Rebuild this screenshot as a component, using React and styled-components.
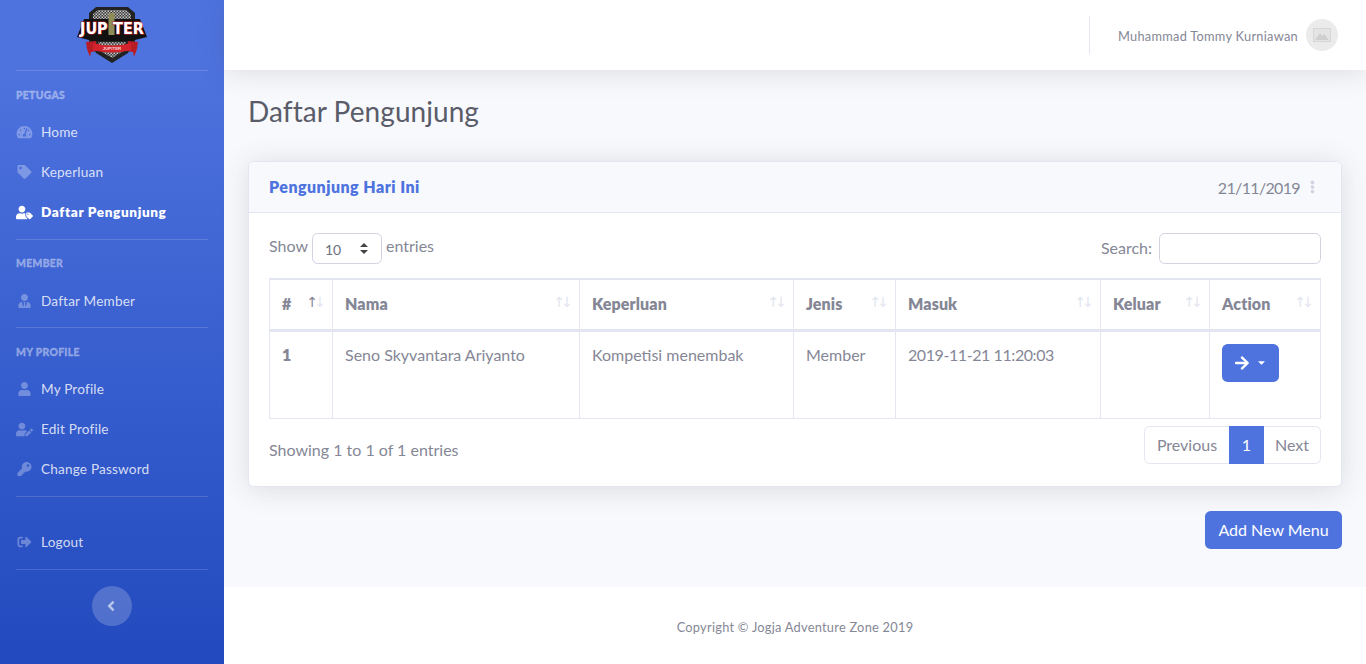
import React from "react";
import styled, { createGlobalStyle } from "styled-components";
import {
  FaTachometerAlt, FaTag, FaUserTag, FaUserTie, FaUser, FaUserEdit, FaKey,
  FaSignOutAlt, FaAngleLeft, FaEllipsisV, FaArrowRight, FaCaretDown,
} from "react-icons/fa";

const FONT = `Lato, "Noto Sans", "Liberation Sans", sans-serif`;

const Global = createGlobalStyle`
  * { box-sizing: border-box; }
  html, body { margin: 0; padding: 0; height: 664px; overflow: hidden; }
  body { font-family: ${FONT}; color: #858796; font-size: 16px; background: #f8f9fc; }
`;

const Wrapper = styled.div`display: flex; height: 664px;`;

const Sidebar = styled.aside`
  width: 224px; flex: none; display: flex; flex-direction: column; padding: 0 16px;
  background: linear-gradient(180deg, #4e73df 10%, #224abe 100%);
`;
const Brand = styled.div`height: 70px; display: flex; justify-content: center; align-items: flex-start; padding-top: 6px;`;
const Divider = styled.hr`margin: ${p => p.$m || "0"}; border: 0; height: 1px; background: rgba(255,255,255,.15); flex: none;`;
const SideHeading = styled.div`
  font-size: 10.4px; font-weight: 900; line-height: 13px; letter-spacing: .3px; text-transform: uppercase;
  -webkit-text-stroke: .3px rgba(255,255,255,.4);
  color: rgba(255,255,255,.4); margin-top: ${p => p.$mt || "18px"}; margin-bottom: ${p => p.$mb || "10px"};
`;
const NavItem = styled.a`
  height: 40px; display: flex; align-items: center; gap: 8px; font-size: 13.6px;
  letter-spacing: ${p => (p.$active ? ".62px" : ".18px")};
  font-weight: ${p => (p.$active ? 800 : 400)};
  color: ${p => (p.$active ? "#fff" : "rgba(255,255,255,.8)")};
  svg { width: 17px; flex: none; font-size: ${p => p.$icon || "14px"}; color: ${p => (p.$active ? "#fff" : "rgba(255,255,255,.3)")}; }
`;
const Toggle = styled.button`
  width: 40px; height: 40px; border-radius: 50%; border: 0; margin: 16px auto 0; display: flex; flex: none;
  align-items: center; justify-content: center; background: rgba(255,255,255,.2); color: rgba(255,255,255,.6); font-size: 16px; padding: 0 2px 0 0;
`;

const Main = styled.div`flex: 1; min-width: 0; display: flex; flex-direction: column;`;
const Topbar = styled.header`
  height: 70px; flex: none; background: #fff; box-shadow: 0 .15rem 1.75rem 0 rgba(58,59,69,.15);
  display: flex; justify-content: flex-end; align-items: center; padding-right: 28px;
`;
const TopDivider = styled.div`width: 1px; height: 38px; background: #e3e6f0; margin-right: 28px;`;
const UserName = styled.span`font-size: 12.8px; color: #858796; margin-right: 8px; letter-spacing: .27px; padding-top: 2px;`;
const Avatar = styled.div`
  width: 32px; height: 32px; border-radius: 50%; background: #ebebeb; display: flex; align-items: center; justify-content: center;
`;

const Content = styled.main`flex: 1; padding: 24px 24px 0; min-height: 0;`;
const Title = styled.h1`margin: 0 0 33px; font-size: 28px; line-height: 34px; font-weight: 400; color: #5a5c69; letter-spacing: .06px;`;

const Card = styled.section`
  background: #fff; border: 1px solid #e3e6f0; border-radius: 5.6px; height: 326px;
  box-shadow: 0 .15rem 1.75rem 0 rgba(58,59,69,.15);
`;
const CardHeader = styled.div`
  height: 51px; padding: 0 26px 0 20px; background: #f8f9fc; border-bottom: 1px solid #e3e6f0; border-radius: 5px 5px 0 0;
  display: flex; align-items: center; justify-content: space-between;
`;
const CardTitle = styled.h6`margin: 0; padding-bottom: 2px; font-size: 16px; font-weight: 800; color: #4e73df; letter-spacing: .46px;`;
const DateBox = styled.div`
  display: flex; align-items: center; gap: 10px; color: #858796; font-size: 16px; letter-spacing: -.65px;
  svg { color: #d1d3e2; font-size: 14px; width: 5px; }
`;
const CardBody = styled.div`padding: 20px;`;
const Controls = styled.div`display: flex; justify-content: space-between; align-items: flex-start; height: 45px;`;
const Label = styled.label`display: flex; align-items: flex-start; gap: 4px; line-height: 26px;`;
const FilterLabel = styled(Label)`gap: 7px; line-height: 29px;`;
const EntrySelect = styled.select`
  appearance: none; width: 70px; height: 31px; margin: 0; padding: 2px 24px 0 12px; font: inherit; font-size: 14px; color: #6e707e;
  border: 1px solid #d1d3e2; border-radius: 5.6px;
  background: #fff url("data:image/svg+xml,%3Csvg xmlns='http://www.w3.org/2000/svg' width='8' height='11' viewBox='0 0 8 11'%3E%3Cpath fill='%23444' d='M4 0 8 4H0zM4 11 0 7h8z'/%3E%3C/svg%3E") no-repeat right 13px center;
`;
const SearchInput = styled.input`
  width: 162px; height: 31px; border: 1px solid #d1d3e2; border-radius: 5.6px; background: #fff; margin: 0; padding: 0 8px;
`;

const Table = styled.table`
  width: 1051px; table-layout: fixed; border-collapse: collapse;
`;
const Th = styled.th`
  position: relative; height: 51px; padding: 0 12px 1px; text-align: left; font-size: 16px; font-weight: 800; color: #858796; letter-spacing: .1px;
  border: 1px solid #e3e6f0; border-top-width: 2px; border-bottom-width: 3px;
`;
const Sort = styled.span`
  position: absolute; right: 10px; top: 12px; font-size: 14px; font-weight: 400; line-height: 20px; letter-spacing: -4px;
  font-family: "DejaVu Sans", sans-serif; color: #e3e6f0;
  b { font-weight: 400; color: ${p => (p.$active ? "#858796" : "inherit")}; }
`;
const Td = styled.td`
  height: 88px; padding: 12px; vertical-align: top; line-height: 22px; border: 1px solid #e3e6f0;
  font-weight: ${p => (p.$bold ? 800 : 400)};
  letter-spacing: ${p => (p.$numeric ? "-.42px" : "0")};
`;
const ActionButton = styled.button`
  width: 57px; height: 38px; border: 0; border-radius: 5.6px; background: #4e73df; color: #fff; display: flex; align-items: center; justify-content: center;
  gap: 6px; padding: 0; font-size: 16px;
  svg + svg { font-size: 11px; }
`;
const Footer2 = styled.div`display: flex; justify-content: space-between; align-items: flex-start; margin-top: 7px;`;
const Info = styled.div`padding-top: 12px; line-height: 24px;`;
const Pager = styled.nav`display: flex; height: 38px; border: 1px solid #e3e6f0; border-radius: 5.6px;`;
const Page = styled.a`
  width: ${p => p.$w}; margin: ${p => (p.$active ? "-1px 0" : "0")}; display: flex; align-items: center; justify-content: center; font-size: 16px;
  background: ${p => (p.$active ? "#4e73df" : "transparent")}; color: ${p => (p.$active ? "#fff" : "#858796")};
`;
const ButtonRow = styled.div`display: flex; justify-content: flex-end; margin-top: 24px;`;
const PrimaryButton = styled.button`
  width: 137px; height: 38px; border: 0; border-radius: 5.6px; background: #4e73df; color: #fff; font: inherit; font-size: 16px; padding: 0 0 2px;
`;
const Foot = styled.footer`
  height: 77px; flex: none; background: #fff; display: flex; align-items: center; justify-content: center; font-size: 12.8px; color: #858796; letter-spacing: .26px; padding-top: 3px;
`;

const Logo = () => (
  <svg width="72" height="58" viewBox="0 0 72 58" aria-label="Jupiter logo">
    <defs>
      <pattern id="chk" width="3" height="3" patternUnits="userSpaceOnUse">
        <rect width="3" height="3" fill="#3a3a3a" />
        <rect width="1.5" height="1.5" fill="#aaa" />
        <rect x="1.5" y="1.5" width="1.5" height="1.5" fill="#ccc" />
      </pattern>
    </defs>
    <path d="M20 1h32l7 6v28l-7 12-16 10-16-10-7-12V7z" fill="#222" />
    <path d="M22 4h28l5 4v12H17V8z" fill="url(#chk)" />
    <path d="M22 36h28l-4 10-10 6-10-6z" fill="url(#chk)" />
    <path d="M1 31 8 13h56l7 18-16 4H17z" fill="#111" />
    <rect x="32.5" y="7" width="6" height="22" fill="#8f8c58" />
    <path d="M10 36l10-1 1 10-6 1-1 5-3-8z M62 36l-10-1-1 10 6 1 1 5 3-8z" fill="#b81c24" />
    <path d="M17 37q19 5 38 0v7q-19 5-38 0z" fill="#d3232c" />
    <text x="36" y="43.5" textAnchor="middle" fontSize="4.4" fontWeight="700" fontFamily="Liberation Sans, sans-serif" fill="#f4d6d6">JUPITER</text>
    <text x="36" y="28" textAnchor="middle" fontSize="15.5" fontWeight="700" fontFamily="DejaVu Sans, sans-serif" fill="#fff" stroke="#c31f26" strokeWidth="1" paintOrder="stroke" textLength="64" lengthAdjust="spacingAndGlyphs">JUP<tspan fill="#8f8c58" stroke="none">I</tspan>TER</text>
  </svg>
);

const Placeholder = () => (
  <svg width="18" height="14" viewBox="0 0 18 14">
    <rect x=".5" y=".5" width="17" height="13" fill="#e4e4e4" stroke="#d6d6d6" />
    <path d="M2 12 7 5l2 3 2-2 5 6z" fill="#cfcfcf" />
  </svg>
);

const columns = [
  { name: "#", w: 63, active: true },
  { name: "Nama", w: 247 },
  { name: "Keperluan", w: 214 },
  { name: "Jenis", w: 102 },
  { name: "Masuk", w: 205 },
  { name: "Keluar", w: 109 },
  { name: "Action", w: 111 },
];

export default function App() {
  return (
    <Wrapper>
      <Global />
      <Sidebar>
        <Brand><Logo /></Brand>
        <Divider />
        <SideHeading>Petugas</SideHeading>
        <NavItem><FaTachometerAlt />Home</NavItem>
        <NavItem><FaTag />Keperluan</NavItem>
        <NavItem $active $icon="17px"><FaUserTag />Daftar Pengunjung</NavItem>
        <Divider $m="7px 0 0" />
        <SideHeading $mt="17px" $mb="11px">Member</SideHeading>
        <NavItem><FaUserTie />Daftar Member</NavItem>
        <Divider $m="6px 0 0" />
        <SideHeading>My Profile</SideHeading>
        <NavItem><FaUser />My Profile</NavItem>
        <NavItem $icon="17px"><FaUserEdit />Edit Profile</NavItem>
        <NavItem><FaKey />Change Password</NavItem>
        <Divider $m="7px 0 25px" />
        <NavItem><FaSignOutAlt />Logout</NavItem>
        <Divider $m="7px 0 0" />
        <Toggle aria-label="Collapse"><FaAngleLeft /></Toggle>
      </Sidebar>
      <Main>
        <Topbar>
          <TopDivider />
          <UserName>Muhammad Tommy Kurniawan</UserName>
          <Avatar><Placeholder /></Avatar>
        </Topbar>
        <Content>
          <Title>Daftar Pengunjung</Title>
          <Card>
            <CardHeader>
              <CardTitle>Pengunjung Hari Ini</CardTitle>
              <DateBox>21/11/2019 <FaEllipsisV /></DateBox>
            </CardHeader>
            <CardBody>
              <Controls>
                <Label>Show
                  <EntrySelect defaultValue="10">
                    <option>10</option><option>25</option><option>50</option><option>100</option>
                  </EntrySelect>
                  entries
                </Label>
                <FilterLabel>Search: <SearchInput /></FilterLabel>
              </Controls>
              <Table>
                <colgroup>
                  {columns.map(c => <col key={c.name} width={c.w} />)}
                </colgroup>
                <thead>
                  <tr>
                    {columns.map(c => (
                      <Th key={c.name}>{c.name}<Sort $active={c.active}><b>↑</b>↓</Sort></Th>
                    ))}
                  </tr>
                </thead>
                <tbody>
                  <tr>
                    <Td $bold>1</Td>
                    <Td>Seno Skyvantara Ariyanto</Td>
                    <Td>Kompetisi menembak</Td>
                    <Td>Member</Td>
                    <Td $numeric>2019-11-21 11:20:03</Td>
                    <Td />
                    <Td><ActionButton aria-label="Action"><FaArrowRight /><FaCaretDown /></ActionButton></Td>
                  </tr>
                </tbody>
              </Table>
              <Footer2>
                <Info>Showing 1 to 1 of 1 entries</Info>
                <Pager>
                  <Page $w="84px">Previous</Page>
                  <Page $w="35px" $active>1</Page>
                  <Page $w="56px">Next</Page>
                </Pager>
              </Footer2>
            </CardBody>
          </Card>
          <ButtonRow><PrimaryButton>Add New Menu</PrimaryButton></ButtonRow>
        </Content>
        <Foot>Copyright © Jogja Adventure Zone 2019</Foot>
      </Main>
    </Wrapper>
  );
}
